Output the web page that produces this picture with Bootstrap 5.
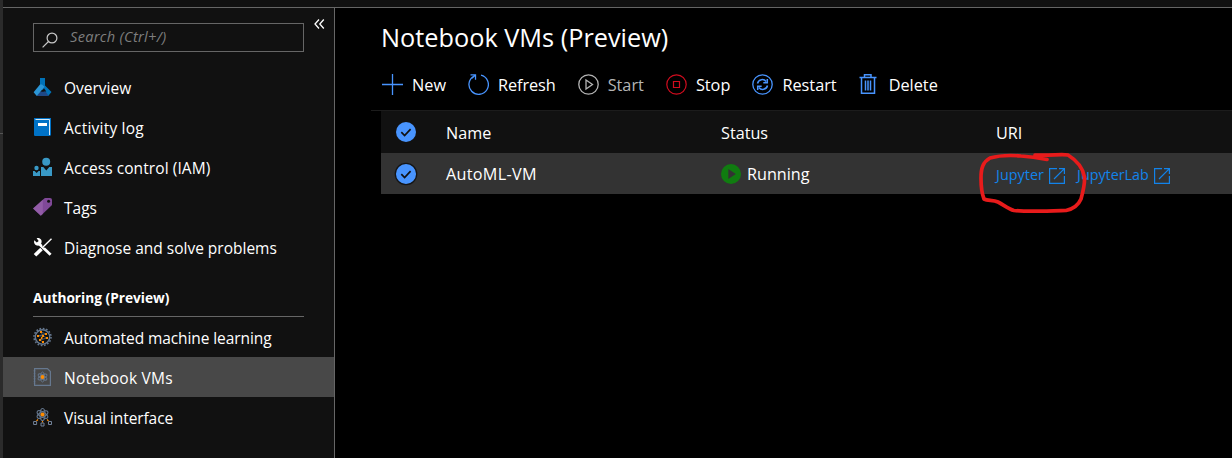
<!DOCTYPE html>
<html lang="en">
<head>
<meta charset="utf-8">
<meta name="viewport" content="width=device-width, initial-scale=1">
<title>Notebook VMs (Preview)</title>
<link href="https://cdn.jsdelivr.net/npm/bootstrap@5.3.0/dist/css/bootstrap.min.css" rel="stylesheet">
<style>
body{background:#000;color:#fff;font-family:"Open Sans","Noto Sans",sans-serif;font-size:15.5px;line-height:20px;height:458px;overflow:hidden}
svg{display:block;flex:none}
.edge-strip{width:3px;background:#2b2b2b;padding-top:133px}
.edge-strip i{display:block;height:1px;background:#555}
.topbar{height:8px;background:#111;border-bottom:1px solid #666}
.side{width:332px;background:#111;border-right:1px solid #666;padding-top:15px}
.search-box{width:271px;height:29px;margin-left:30px;border:1px solid #666;padding-left:8px;color:#7e7e7e;font-size:14.6px;font-style:italic;letter-spacing:.3px}
.search-box svg{margin-top:5px}
.search-box span{margin-left:11px;margin-top:-3px}
.collapse-btn{margin:-5px 0 0 10px}
.side .list-group{--bs-list-group-bg:transparent;--bs-list-group-color:#fff;--bs-list-group-active-bg:#484848;--bs-list-group-active-color:#fff;--bs-list-group-border-width:0}
.top-items{margin-top:15px}
.side .list-group-item{height:40px;padding:0 0 0 30px;display:flex;align-items:center;gap:11px}
.side .list-group-item span{padding-top:2px}
.side .list-group-item svg{width:20px;height:20px}
.section-title{margin:21px 30px 0;height:29px;border-bottom:1px solid #666;font-size:13.7px;font-weight:700}
.main-title{font-size:25.3px;line-height:32px;font-weight:400;margin:13px 0 0 46px}
.tools{height:58px;margin-left:36px;padding:12px 0 0 11px;font-size:16.3px;border-bottom:1px solid #1c1c1c}
.tools button{all:unset;display:flex;align-items:center;height:38px;margin-right:22px}
.tools button span{margin-left:9px;padding-top:2px}
.tools button.off{color:#b5b5b5}
.grid-head,.grid-row{margin-left:46px;font-size:16.2px}
.grid-head{background:#111;height:42px}
.grid-head .cell{padding-top:2px}
.grid-row{background:#333;height:41px}
.c-check{width:65px;padding-left:13px}
.c-name,.c-status{width:275px}
.c-status{gap:6px}
.uri{color:#1283ea;font-size:14.3px;text-decoration:none;gap:5px;padding-top:2px;margin-right:12px}
.uri svg{margin-top:2px}
.pen{left:975px;top:148px;pointer-events:none}
.t0{letter-spacing:.08px}.t1{letter-spacing:.22px}.t2{letter-spacing:.3px}.t3{letter-spacing:-.09px}.t4{letter-spacing:-.25px}
</style>
</head>
<body class="d-flex">
<div class="edge-strip"><i></i></div>
<div class="flex-grow-1 d-flex flex-column">
  <div class="topbar"></div>
  <div class="d-flex flex-grow-1">
    <nav class="side">
      <div class="d-flex align-items-start">
        <div class="search-box d-flex align-items-center">
          <svg width="17" height="17" viewBox="0 0 17 17" fill="none" stroke="#c8c8c8" stroke-width="1.2"><circle cx="10" cy="6" r="4.9"/><path d="M6.5 9.5L.6 15.4"/></svg>
          <span>Search (Ctrl+/)</span>
        </div>
        <svg class="collapse-btn" width="11" height="12" viewBox="0 0 11 12" fill="none" stroke="#fff" stroke-width="1.3"><path d="M5 1.500L1 6l4 4.500M9.800 1.500L5.800 6l4 4.500"/></svg>
      </div>
      <div class="list-group list-group-flush top-items">
        <div class="list-group-item"><svg viewBox="0 0 20 20"><path fill="#0072b8" d="M7 1h5v7.500l6.500 6.500-3.300 4L8.500 12 7 9z"/><path fill="#1e4886" d="M6.500 14.500h6.200L15.500 19H3.500z"/><path fill="#2b96d6" d="M7 7.500h2l2.500 2.300L3.800 19 .6 15.300z"/><path fill="#111" d="M8.500 14.500l2.500-3.300 2.300 3.300z"/></svg><span>Overview</span></div>
        <div class="list-group-item"><svg viewBox="0 0 20 20"><path fill="#0072c6" d="M1 1h17v17l-1 1H1.800l-.8-.8z"/><path fill="none" stroke="#d5e9f7" stroke-width="1" d="M2.500 2.500h14V18"/><path fill="#fff" d="M5 6h9v3H5z"/></svg><span class="t1">Activity log</span></div>
        <div class="list-group-item"><svg viewBox="0 0 20 20" fill="#3999c6"><circle cx="13.200" cy="4.800" r="4"/><path d="M8 10h2.300l3 3.400 3-3.400H19v9H8z"/><circle cx="3.500" cy="11" r="2.200"/><path d="M0 14h1.600l2 2 2-2H7v5H0z"/></svg><span class="t0">Access control (IAM)</span></div>
        <div class="list-group-item"><svg viewBox="0 0 20 20"><path fill="#804998" d="M11.500 1.300Q12 1 12.500 1H17q2 0 2 2v4.500q0 .5-.5 1L7.800 18.800 0 11.500z"/><path fill="#a06bb5" opacity=".55" d="M9.800 2.800V17L7.800 18.800 0 11.500z"/><circle cx="15.600" cy="4.200" r="1.500" fill="#111"/></svg><span>Tags</span></div>
        <div class="list-group-item"><svg viewBox="0 0 20 20" fill="none"><path stroke="#fff" stroke-width="2.800" d="M5.500 6.200L17.600 17.700"/><path fill="#fff" d="M1.300 3.200l2.500 2.300 1.900-1.600L3.600 1.300C7 .3 9.500 3 8.400 6.200L5.800 8.600C2.500 9 .3 6.500 1.300 3.200z"/><path stroke="#111" stroke-width="3" d="M12.500 7.500L10 10"/><path stroke="#fff" stroke-width="1.400" d="M18.500 1.700L9 11"/><path stroke="#fff" stroke-width="3.600" d="M8.500 12L2 18.300"/></svg><span>Diagnose and solve problems</span></div>
      </div>
      <div class="section-title">Authoring (Preview)</div>
      <div class="list-group list-group-flush">
        <div class="list-group-item"><svg viewBox="0 0 20 20" fill="none" stroke="#66788f"><circle cx="9.500" cy="10" r="7.200" stroke-width="1.400"/><circle cx="9.500" cy="10" r="8.500" stroke-width="1.600" stroke-dasharray="1.670 1.670"/><path stroke-width=".7" d="M8 5l5 2-8 2 5 0 4 2-7 2 3 2M8 5l2 4-3 4"/><g fill="#ff8c00" stroke="none"><path d="M7 4h2v2H7zM12 6h2v2h-2zM4 8h2v2H4zM9 8h2v2H9zM13 10h2v2h-2zM6 12h2v2H6zM9 14h2v2H9zM8 10h1.500v2H8z"/></g></svg><span class="t3">Automated machine learning</span></div>
        <div class="list-group-item active"><svg viewBox="0 0 20 20" fill="none" stroke="#66788f"><path stroke-width="1.200" d="M1.600 1.600h12.800l3 3v13.800H1.600z"/><path stroke-width="1.500" stroke-dasharray="1.500 1.200" d="M1.500 3v14"/><g stroke-width=".9"><ellipse cx="9.500" cy="10" rx="2" ry="5"/><ellipse cx="9.500" cy="10" rx="2" ry="5" transform="rotate(60 9.500 10)"/><ellipse cx="9.500" cy="10" rx="2" ry="5" transform="rotate(120 9.500 10)"/></g><circle cx="9.500" cy="10" r="1.900" fill="#ff8c00" stroke="none"/></svg><span class="t1">Notebook VMs</span></div>
        <div class="list-group-item"><svg viewBox="0 0 20 20" fill="none" stroke="#66788f"><g stroke-width="1.100"><ellipse cx="9.500" cy="7.500" rx="2.600" ry="6"/><ellipse cx="9.500" cy="7.500" rx="2.600" ry="6" transform="rotate(60 9.500 7.500)"/><ellipse cx="9.500" cy="7.500" rx="2.600" ry="6" transform="rotate(120 9.500 7.500)"/></g><path stroke="#ff8c00" stroke-width="1.100" d="M5 12.500L3.500 14M14 12.500l1.500 1.500M9.500 14v1.500"/><circle cx="9.500" cy="7.500" r="2" fill="#ff8c00" stroke="none"/><path stroke="#728298" d="M.6 14.500h3v3h-3zM8 16h3v3H8zM15.500 14.500h3v3h-3z"/></svg><span class="t3">Visual interface</span></div>
      </div>
    </nav>
    <main class="flex-grow-1">
      <h1 class="main-title">Notebook VMs (Preview)</h1>
      <div class="tools d-flex">
        <button><svg width="21" height="21" viewBox="0 0 21 21" stroke="#4894fe" stroke-width="1.300"><path d="M10.500 0v21M0 10.500h21"/></svg><span>New</span></button>
        <button><svg width="21" height="21" viewBox="0 0 21 21" fill="none" stroke="#4894fe" stroke-width="1.300"><path d="M13 1.200a9.700 9.700 0 1 1-6.800.8M2.500.8h5v5M7.500.8L4 4.300"/></svg><span class="t3">Refresh</span></button>
        <button class="off"><svg width="21" height="21" viewBox="0 0 21 21" fill="none" stroke="#b5b5b5" stroke-width="1.300"><circle cx="10.500" cy="10.500" r="9.700"/><path d="M8 6l6.500 4.500L8 15z"/></svg><span>Start</span></button>
        <button><svg width="21" height="21" viewBox="0 0 21 21" fill="none" stroke="#d00c1e" stroke-width="1.200"><circle cx="10.500" cy="10.500" r="9.700"/><path d="M7.500 7.500h6v6h-6z"/></svg><span>Stop</span></button>
        <button><svg width="21" height="21" viewBox="0 0 21 21" fill="none" stroke="#4894fe" stroke-width="1.300"><circle cx="10.500" cy="10.500" r="9.700"/><path stroke-width="1.500" d="M5.500 9.500c1-4.500 6.500-5 8.500-2M15.300 5v3.700h-4M15.500 11.500c-1 4.500-6.500 5-8.500 2M5.700 16v-3.700h4"/></svg><span>Restart</span></button>
        <button><svg width="18" height="21" viewBox="0 0 18 21" fill="none" stroke="#4894fe" stroke-width="1.500"><path d="M.5 3.500h17M5.500 3V.8h6.500V3M2.500 4v15.200h13V4M6.500 6.500v10M9 6.500v10M11.500 6.500v10"/></svg><span class="ms-2 ps-1">Delete</span></button>
      </div>
      <div class="grid-head d-flex align-items-center">
        <div class="c-check"><svg width="24" height="24" viewBox="0 0 24 24"><circle cx="12" cy="12" r="10" fill="#4894fe"/><path d="M7.300 12.200l3.300 3.300 6-6.300" fill="none" stroke="#111" stroke-width="1.700"/></svg></div>
        <div class="c-name cell">Name</div><div class="c-status cell">Status</div><div class="cell">URI</div>
      </div>
      <div class="grid-row d-flex align-items-center">
        <div class="c-check"><svg width="24" height="24" viewBox="0 0 24 24"><circle cx="12" cy="12" r="10.700" fill="#4894fe" stroke="#151515" stroke-width="1.300"/><path d="M7.300 12.200l3.300 3.300 6-6.300" fill="none" stroke="#111" stroke-width="1.700"/></svg></div>
        <div class="c-name t2">AutoML-VM</div>
        <div class="c-status d-flex align-items-center"><svg width="20" height="20" viewBox="0 0 20 20"><circle cx="10" cy="10" r="10" fill="#107c10"/><path d="M7.300 5l7.500 5-7.500 5z" fill="#333"/></svg><span>Running</span></div>
        <a class="uri d-flex align-items-center" href="#"><span class="t0">Jupyter</span><svg width="16" height="16" viewBox="0 0 16 16" fill="none" stroke="#1283ea" stroke-width="1.200"><path d="M8 .6H.6v14.800h14.800V8M10 .6h5.400V6M15.400.6L5 11"/></svg></a>
        <a class="uri d-flex align-items-center" href="#"><span>JupyterLab</span><svg width="16" height="16" viewBox="0 0 16 16" fill="none" stroke="#1283ea" stroke-width="1.200"><path d="M8 .6H.6v14.800h14.800V8M10 .6h5.400V6M15.400.6L5 11"/></svg></a>
      </div>
    </main>
  </div>
</div>
<svg class="pen position-absolute" width="115" height="70" viewBox="0 0 115 70" fill="none" stroke="#e81b1b" stroke-width="3.700" stroke-linecap="round" stroke-linejoin="round"><path d="M72 11.500C62 9.500 55 8.500 46 8C35 7 24 7.500 15 10C8 14 6 20 6 30C6 38 7 46 9 51C13 53 18 51.500 23 54C29 57 33 61 39 62.500C54 64 76 63 91 62.500C98 61 103 58 106 51C108 44 110 37 109.500 29C108 20 101 12 93 7C86 5.500 76 8 60 7"/></svg>
</body>
</html>
